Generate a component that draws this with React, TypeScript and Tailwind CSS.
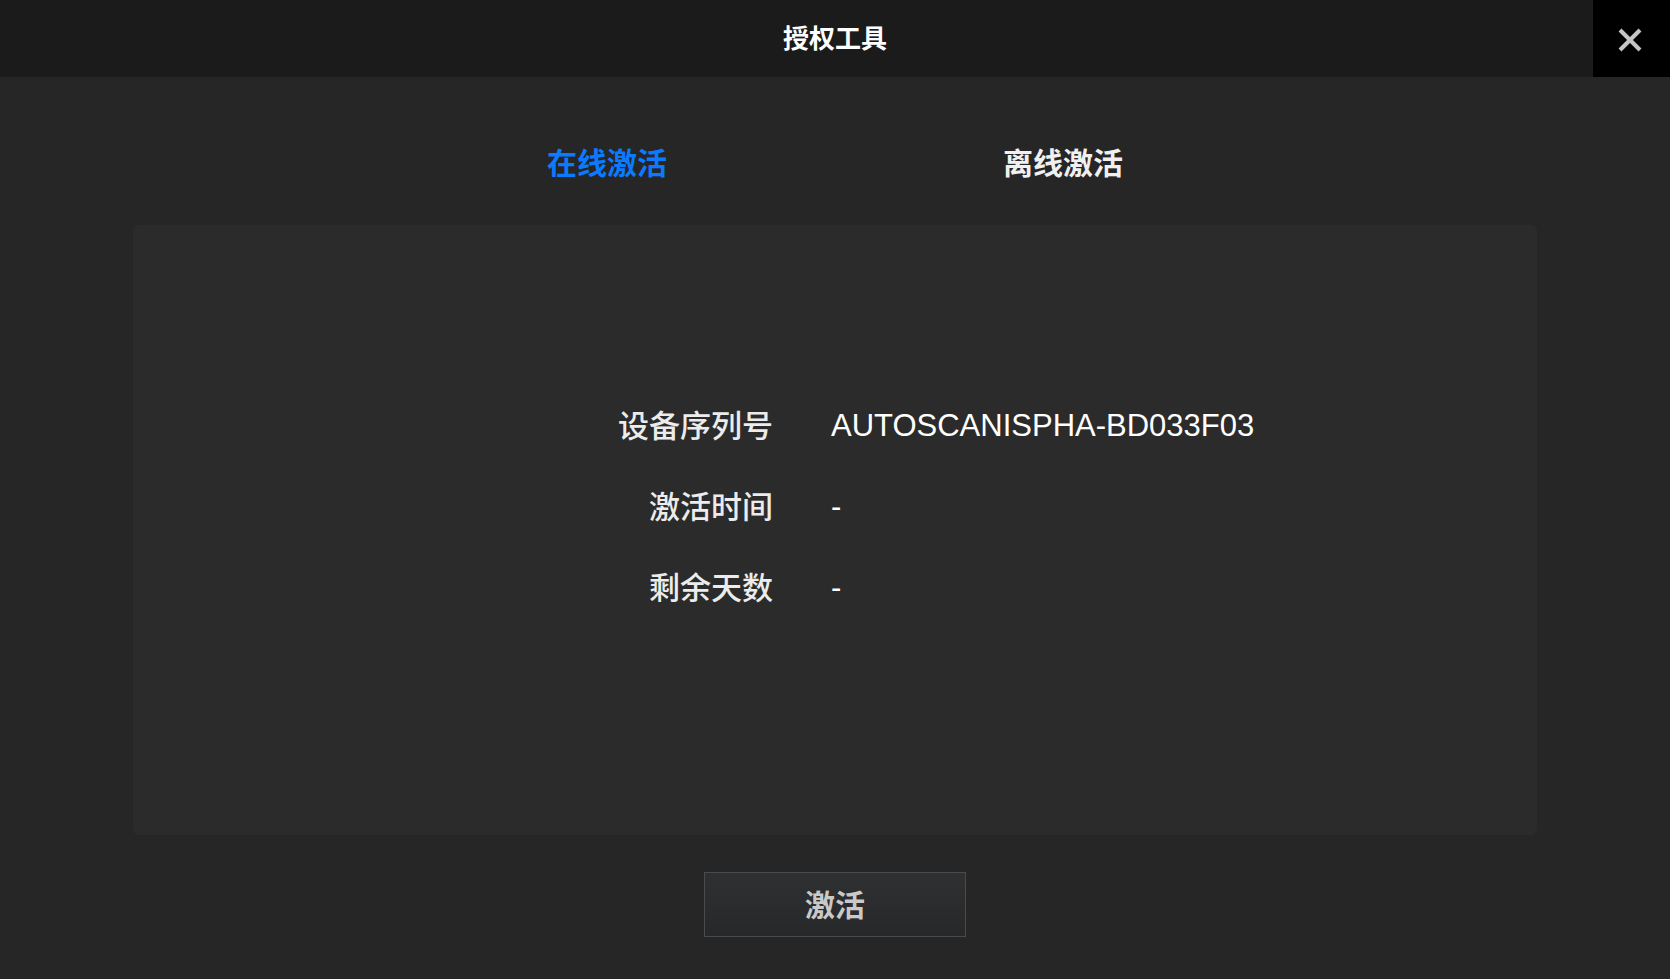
import React, { useState } from "react";

const cjk = { fontFamily: '"Noto Sans CJK SC", "Noto Sans", sans-serif' };
const latin = { fontFamily: '"Liberation Sans", Arial, "Noto Sans CJK SC", sans-serif' };

function Row({ label, value }: { label: string; value: string }) {
  return (
    <div className="flex h-[81px] items-center">
      <div className="w-[640px] pb-[4px] text-right text-[31px] font-medium text-[#ececec]" style={cjk}>
        {label}
      </div>
      <div className="ml-[58px] text-[31px] text-white" style={latin}>
        {value}
      </div>
    </div>
  );
}

export default function App() {
  const [tab, setTab] = useState(0);
  const tabs = ["在线激活", "离线激活"];

  return (
    <div className="flex h-[979px] w-full flex-col bg-[#262626]" style={cjk}>
      {/* Title bar */}
      <header className="flex h-[77px] flex-shrink-0 bg-[#1b1b1b]">
        <div className="flex flex-1 items-center justify-center pb-[4px] pl-[77px]">
          <h1 className="text-[26px] font-bold text-white">授权工具</h1>
        </div>
        <button className="flex h-[77px] w-[77px] items-center justify-center bg-black pr-[4px] pt-[2px]">
          <svg width="26" height="26" viewBox="0 0 26 26" fill="none" stroke="#c6c6c6" strokeWidth="4">
            <line x1="3" y1="3" x2="23" y2="23" />
            <line x1="23" y1="3" x2="3" y2="23" />
          </svg>
        </button>
      </header>

      {/* Tabs */}
      <nav className="mt-[64px] mb-[44px] flex h-[40px] justify-center">
        {tabs.map((t, i) => (
          <button
            key={t}
            onClick={() => setTab(i)}
            className={`w-[456px] text-center text-[30px] font-bold leading-[40px] ${
              tab === i ? "text-[#0a7bff]" : "text-[#f0f0f0]"
            }`}
          >
            {t}
          </button>
        ))}
      </nav>

      {/* Info panel */}
      <section className="mx-[133px] h-[610px] rounded-[6px] bg-[#2b2b2b] pt-[161px]">
        <Row label="设备序列号" value="AUTOSCANISPHA-BD033F03" />
        <Row label="激活时间" value="-" />
        <Row label="剩余天数" value="-" />
      </section>

      {/* Action */}
      <div className="mt-[37px] flex justify-center">
        <button className="h-[65px] w-[262px] border border-[#4a4b4d] bg-gradient-to-b from-[#2f3032] to-[#27282a] pb-[2px] text-[30px] font-bold text-[#c9c9c9]">
          激活
        </button>
      </div>
    </div>
  );
}
